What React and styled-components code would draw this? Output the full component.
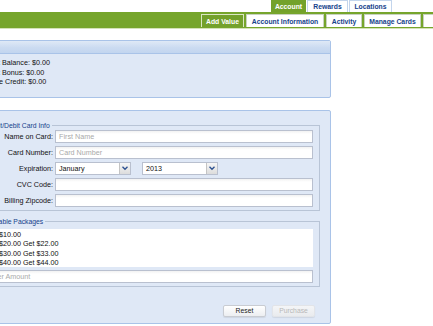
import React from "react";
import styled, { createGlobalStyle } from "styled-components";

const Global = createGlobalStyle`
  html, body { margin: 0; padding: 0; background: #fff; overflow: hidden; }
  body { font-family: "Liberation Sans", Arial, sans-serif; font-size: 7.2px; color: #000; }
  * { box-sizing: border-box; }
`;

const Page = styled.div`
  width: 433px;
  height: 326px;
  overflow: hidden;
`;

const TopNav = styled.div`
  display: flex;
  align-items: flex-end;
  height: 12px;
  padding-left: 271px;
  gap: 1px;
`;

const MainTab = styled.div`
  flex: none;
  height: 12px;
  width: ${p => p.$w}px;
  display: flex;
  align-items: center;
  justify-content: center;
  font-weight: bold;
  font-size: 6.8px;
  color: ${p => (p.$active ? "#fff" : "#15428b")};
  background: ${p => (p.$active ? "#73a22b" : "#fff")};
  border: 1px solid ${p => (p.$active ? "#73a22b" : "#c3d5ec")};
  border-bottom: none;
  white-space: nowrap;
`;

const SubBar = styled.div`
  display: flex;
  align-items: flex-start;
  gap: 2px;
  height: 17px;
  padding: 2px 0 0 201px;
  background: #76a52c;
  border-bottom: 1px solid #d4e2b8;
  white-space: nowrap;
  overflow: hidden;
`;

const SubTab = styled.div`
  flex: none;
  height: 13px;
  width: ${p => p.$w}px;
  display: flex;
  align-items: center;
  justify-content: center;
  font-weight: bold;
  font-size: 6.8px;
  color: ${p => (p.$active ? "#fff" : "#15428b")};
  background: ${p => (p.$active ? "#74a12c" : "#fff")};
  border: 1px solid ${p => (p.$active ? "#dbe7c4" : "#c8d2c0")};
  border-bottom: none;
`;

const Content = styled.div`
  margin-left: -33px;
  width: 364px;
  padding-top: 11px;
  display: flex;
  flex-direction: column;
  gap: 12px;
`;

const Panel = styled.div`
  background: #dfe8f6;
  border: 1px solid #a9c3e8;
  border-radius: 2px;
`;

const PanelHeader = styled.div`
  height: 13px;
  padding-left: 5px;
  display: flex;
  align-items: center;
  font-weight: bold;
  font-size: 7px;
  color: #15428b;
  background: linear-gradient(#dfe9f6, #cbdbf1 55%, #c2d5ef);
  border-bottom: 1px solid #a9c3e8;
`;

const PanelBody = styled.div`
  padding: ${p => p.$pad};
  display: flex;
  flex-direction: column;
`;

const InfoLine = styled.div`
  height: 9.5px;
  line-height: 9.5px;
  padding-left: 6px;
  color: #111;
`;

const FieldSet = styled.fieldset`
  margin: 0;
  padding: 0 6px ${p => p.$pb}px 7px;
  border: 1px solid #b8c4d6;
  display: flex;
  flex-direction: column;
  gap: ${p => p.$gap}px;
`;

const Legend = styled.legend`
  padding: 0 2px;
  margin-left: -4px;
  font-size: 6.8px;
  color: #15428b;
  line-height: 8px;
`;

const Row = styled.div`
  display: flex;
  align-items: center;
  gap: 2px;
  height: 13px;
`;

const Label = styled.div`
  width: 67px;
  flex: none;
  text-align: right;
  color: #111;
  white-space: nowrap;
`;

const Input = styled.div`
  height: 13px;
  flex: 1;
  display: flex;
  align-items: center;
  padding-left: 3px;
  background: linear-gradient(#f2f2f2, #fff 3px);
  border: 1px solid #b9c0cf;
  color: ${p => (p.$ph ? "#a9a9a9" : "#111")};
  white-space: nowrap;
  overflow: hidden;
`;

const SelectGroup = styled.div`
  display: flex;
  gap: 11px;
`;

const Select = styled.div`
  width: 76px;
  height: 13px;
  display: flex;
  background: #fff;
  border: 1px solid #b9c0cf;
`;

const SelectText = styled.div`
  flex: 1;
  display: flex;
  align-items: center;
  padding-left: 3px;
  color: #111;
`;

const SelectBtn = styled.div`
  width: 11px;
  display: flex;
  align-items: center;
  justify-content: center;
  background: linear-gradient(#f6f6f6, #dcdcdc);
  border-left: 1px solid #c4c4c4;
`;

const List = styled.div`
  background: #fff;
  height: 38px;
  margin-top: 3px;
  margin-left: -7px;
  padding: 1px 0 0 20px;
  display: flex;
  flex-direction: column;
`;

const ListItem = styled.div`
  height: 9.5px;
  line-height: 9.5px;
  color: #111;
`;

const AmountInput = styled(Input)`
  flex: none;
  margin-left: -4px;
`;

const Buttons = styled.div`
  display: flex;
  justify-content: flex-end;
  gap: 6px;
  padding: 18px 5px 6px 0;
`;

const Button = styled.div`
  width: 43px;
  height: 12px;
  display: flex;
  align-items: center;
  justify-content: center;
  border: 1px solid ${p => (p.$disabled ? "#e2e4e8" : "#c9ccd2")};
  border-radius: 2px;
  background: ${p => (p.$disabled ? "linear-gradient(#f4f5f7, #e9ebee)" : "linear-gradient(#fff, #eceef1)")};
  color: ${p => (p.$disabled ? "#b8b8b8" : "#222")};
  font-size: 6.8px;
  box-shadow: 0 1px 1px rgba(0,0,0,0.08);
`;

const Arrow = () => (
  <svg width="6" height="5" viewBox="0 0 6 5">
    <path d="M0.5 0.8 L3 3.3 L5.5 0.8" stroke="#2b4f8f" strokeWidth="1.3" fill="none" />
  </svg>
);

export default function App() {
  return (
    <Page>
      <Global />
      <TopNav>
        <MainTab $active $w={35}>Account</MainTab>
        <MainTab $w={41}>Rewards</MainTab>
        <MainTab $w={43}>Locations</MainTab>
      </TopNav>
      <SubBar>
        <SubTab $active $w={43}>Add Value</SubTab>
        <SubTab $w={78}>Account Information</SubTab>
        <SubTab $w={36}>Activity</SubTab>
        <SubTab $w={57}>Manage Cards</SubTab>
        <SubTab $w={50}>Settings</SubTab>
      </SubBar>
      <Content>
        <Panel>
          <PanelHeader>Balance</PanelHeader>
          <PanelBody $pad="4px 0 10px 0">
            <InfoLine>Account Balance: $0.00</InfoLine>
            <InfoLine>Account Bonus: $0.00</InfoLine>
            <InfoLine>Available Credit: $0.00</InfoLine>
          </PanelBody>
        </Panel>
        <Panel>
          <PanelBody $pad="11px 10px 0 10px">
            <FieldSet $gap={3} $pb={3}>
              <Legend>Credit/Debit Card Info</Legend>
              <Row>
                <Label>Name on Card:</Label>
                <Input $ph>First Name</Input>
              </Row>
              <Row>
                <Label>Card Number:</Label>
                <Input $ph>Card Number</Input>
              </Row>
              <Row>
                <Label>Expiration:</Label>
                <SelectGroup>
                  <Select>
                    <SelectText>January</SelectText>
                    <SelectBtn><Arrow /></SelectBtn>
                  </Select>
                  <Select>
                    <SelectText>2013</SelectText>
                    <SelectBtn><Arrow /></SelectBtn>
                  </Select>
                </SelectGroup>
              </Row>
              <Row>
                <Label>CVC Code:</Label>
                <Input />
              </Row>
              <Row>
                <Label>Billing Zipcode:</Label>
                <Input />
              </Row>
            </FieldSet>
            <FieldSet $gap={3} $pb={3} style={{ marginTop: 7 }}>
              <Legend>Available Packages</Legend>
              <List>
                <ListItem>$10.00</ListItem>
                <ListItem>$20.00 Get $22.00</ListItem>
                <ListItem>$30.00 Get $33.00</ListItem>
                <ListItem>$40.00 Get $44.00</ListItem>
              </List>
              <AmountInput $ph>Other Amount</AmountInput>
            </FieldSet>
            <Buttons>
              <Button>Reset</Button>
              <Button $disabled>Purchase</Button>
            </Buttons>
          </PanelBody>
        </Panel>
      </Content>
    </Page>
  );
}
